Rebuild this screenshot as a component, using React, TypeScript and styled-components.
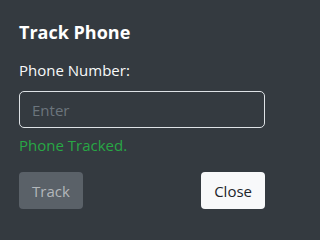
import styled, { createGlobalStyle } from "styled-components";

const GlobalStyle = createGlobalStyle`
    html, body {
        margin: 0;
        padding: 0;
        background: #343a40;
    }
    body {
        font-family: "Open Sans", "Noto Sans", sans-serif;
    }
`;

const Panel = styled.div`
    width: 286px;
    height: 232px;
    box-sizing: border-box;
    padding: 18px 21px 0 19px;
    background-color: #343a40;
    color: #f8f9fa;
    display: flex;
    flex-direction: column;
`;

const Title = styled.h5`
    margin: 0 0 12px;
    font-size: 18px;
    font-weight: 700;
    line-height: 28px;
    color: #ffffff;
`;

const Label = styled.label`
    display: block;
    font-size: 15px;
    line-height: 24px;
    margin-bottom: 9px;
`;

const Input = styled.input`
    box-sizing: border-box;
    width: 100%;
    height: 37px;
    padding: 6px 12px;
    font-family: inherit;
    font-size: 15px;
    color: #f8f9fa;
    background: transparent;
    border: 1px solid #dee2e6;
    border-radius: 5px;
    outline: none;

    &::placeholder {
        color: #6c757d;
    }
`;

const Status = styled.div<{ $ok: boolean }>`
    margin-top: 6px;
    font-size: 15px;
    line-height: 22px;
    color: ${(p) => (p.$ok ? "#28a745" : "#dc3545")};
`;

const Footer = styled.div`
    display: flex;
    justify-content: space-between;
    margin-top: 16px;
`;

const Button = styled.button<{ $variant: "secondary" | "light" }>`
    height: 37px;
    padding: 0 13px;
    font-family: inherit;
    font-size: 15px;
    border: none;
    border-radius: 4px;
    background-color: ${(p) => (p.$variant === "light" ? "#f8f9fa" : "#5a6168")};
    color: ${(p) => (p.$variant === "light" ? "#212529" : "#b3b7bb")};
    cursor: ${(p) => (p.$variant === "light" ? "pointer" : "default")};
`;

export default function App() {
    return (
        <>
            <GlobalStyle />
            <Panel>
                <Title>Track Phone</Title>
                <Label htmlFor="phone">Phone Number:</Label>
                <Input id="phone" placeholder="Enter" />
                <Status $ok={true}>Phone Tracked.</Status>
                <Footer>
                    <Button $variant="secondary" disabled>Track</Button>
                    <Button $variant="light">Close</Button>
                </Footer>
            </Panel>
        </>
    );
}
